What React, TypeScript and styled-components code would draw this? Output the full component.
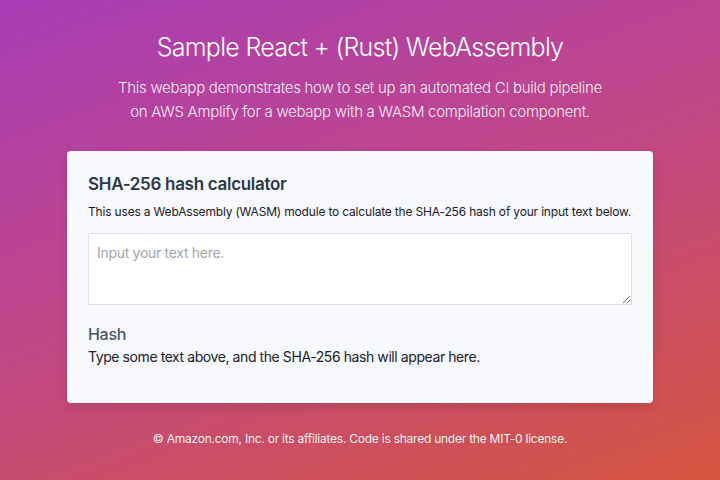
import React from "react";
import styled, { createGlobalStyle } from "styled-components";

const Global = createGlobalStyle`
  html, body { margin: 0; padding: 0; }
  body {
    font-family: Inter, "Noto Sans", sans-serif;
    -webkit-font-smoothing: antialiased;
  }
`;

const Page = styled.div`
  width: 720px;
  height: 480px;
  box-sizing: border-box;
  background: linear-gradient(160deg, #a83db6 0%, #c24884 50%, #d5553f 100%);
  display: flex;
  flex-direction: column;
  align-items: center;
  padding-top: 30px;
  color: #fff;
`;

const Title = styled.h1`
  margin: 0;
  font-size: 25px;
  font-weight: 300;
  line-height: 34px;
  letter-spacing: -0.72px;
`;

const Intro = styled.p`
  margin: 12px 0 0;
  font-size: 15px;
  font-weight: 300;
  line-height: 24px;
  letter-spacing: -0.28px;
  text-align: center;
  color: rgba(255, 255, 255, 0.92);
`;

const Card = styled.section`
  margin-top: 27px;
  width: 586px;
  height: 252px;
  box-sizing: border-box;
  background: #f7f9fc;
  border-radius: 4px;
  padding: 21px 21px 0 21px;
  color: #2d3748;
  box-shadow: 0 4px 10px rgba(0, 0, 0, 0.12);
  display: flex;
  flex-direction: column;
`;

const CardTitle = styled.h2`
  margin: 0;
  font-size: 17px;
  font-weight: 600;
  line-height: 24px;
  letter-spacing: -0.3px;
  color: #2d3748;
`;

const CardText = styled.p`
  margin: 7px 0 0;
  font-size: 12px;
  line-height: 18px;
  letter-spacing: -0.18px;
  white-space: nowrap;
  color: #1a202c;
`;

const TextArea = styled.textarea`
  margin-top: 12px;
  width: 544px;
  height: 72px;
  box-sizing: border-box;
  border: 1px solid #dcdfe4;
  border-radius: 1px;
  background: #fff;
  padding: 9px 8px;
  font-family: Inter, "Noto Sans", sans-serif;
  font-size: 14px;
  line-height: 20px;
  letter-spacing: -0.3px;
  color: #2d3748;
  resize: vertical;
  outline: none;
  &::placeholder {
    color: #a0a5ae;
  }
`;

const HashLabel = styled.h3`
  margin: 18px 0 0;
  font-size: 16px;
  font-weight: 500;
  line-height: 22px;
  letter-spacing: -0.3px;
  color: #4a5568;
`;

const HashText = styled.p`
  margin: 2px 0 0;
  font-size: 14px;
  line-height: 20px;
  letter-spacing: -0.42px;
  color: #1a202c;
`;

const Footer = styled.footer`
  margin-top: 27px;
  font-size: 12px;
  line-height: 18px;
  letter-spacing: -0.24px;
  color: rgba(255, 255, 255, 0.95);
`;

export default function App() {
  return (
    <>
      <Global />
      <Page>
        <Title>Sample React + (Rust) WebAssembly</Title>
        <Intro>
          This webapp demonstrates how to set up an automated CI build pipeline
          <br />
          on AWS Amplify for a webapp with a WASM compilation component.
        </Intro>
        <Card>
          <CardTitle>SHA-256 hash calculator</CardTitle>
          <CardText>
            This uses a WebAssembly (WASM) module to calculate the SHA-256 hash of your input text below.
          </CardText>
          <TextArea placeholder="Input your text here." />
          <HashLabel>Hash</HashLabel>
          <HashText>Type some text above, and the SHA-256 hash will appear here.</HashText>
        </Card>
        <Footer>© Amazon.com, Inc. or its affiliates. Code is shared under the MIT-0 license.</Footer>
      </Page>
    </>
  );
}
